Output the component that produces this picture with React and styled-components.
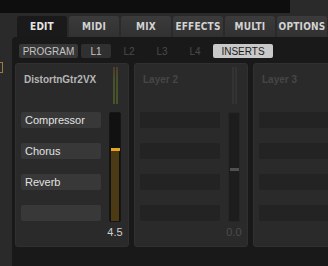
import React from "react";
import styled, { createGlobalStyle } from "styled-components";

const Global = createGlobalStyle`
  html, body {
    margin: 0;
    padding: 0;
    background: #2a2a2a;
    width: 328px;
    height: 266px;
    overflow: hidden;
  }
`;

const Page = styled.div`
  width: 328px;
  height: 266px;
  display: flex;
  flex-direction: column;
  background: #2a2a2a;
  font-family: "Liberation Sans", Arial, sans-serif;
  overflow: hidden;
`;

const TopStrip = styled.div`
  height: 13px;
  width: 290px;
  background: #0e0e0e;
`;

const TabRow = styled.div`
  display: flex;
  gap: 2px;
  margin-top: 3px;
  padding-left: 17px;
  height: 21px;
`;

const Tab = styled.div`
  width: 50px;
  flex: none;
  display: flex;
  align-items: center;
  justify-content: center;
  border-radius: 3px 3px 0 0;
  background: ${(p) =>
    p.$active ? "#1a1a1a" : "linear-gradient(#3b3b3b, #313131)"};
  color: ${(p) => (p.$active ? "#e6e6e6" : "#d2d2d2")};
  font-family: "DejaVu Sans Condensed", "DejaVu Sans", sans-serif;
  font-weight: bold;
  font-size: 10px;
  letter-spacing: 0.2px;
`;

const Body = styled.div`
  flex: 1;
  display: flex;
  min-height: 0;
`;

const Gutter = styled.div`
  width: 12px;
  flex: none;
  padding-top: 25px;
`;

const Marker = styled.div`
  width: 2px;
  height: 9px;
  border: 1px solid #9c7c3c;
  border-left: none;
`;

const MainPanel = styled.div`
  flex: 1;
  background: #191919;
  border-top-left-radius: 4px;
  padding: 7px 0 0 3px;
  display: flex;
  flex-direction: column;
  overflow: hidden;
`;

const SubTabs = styled.div`
  display: flex;
  gap: 3px;
  padding-left: 4px;
  height: 14px;
`;

const SubTab = styled.div`
  width: ${(p) => p.$w || 30}px;
  flex: none;
  display: flex;
  align-items: center;
  justify-content: center;
  border-radius: 2px;
  font-size: 10px;
  background: ${(p) =>
    p.$light ? "#c9c9c9" : p.$dim ? "transparent" : p.$mid ? "#303030" : "#373737"};
  color: ${(p) => (p.$light ? "#1c1c1c" : p.$dim ? "#4a4a4a" : "#c4c4c4")};
`;

const Layers = styled.div`
  display: flex;
  gap: 5px;
  margin-top: 5px;
`;

const Card = styled.div`
  width: 114px;
  height: 184px;
  flex: none;
  box-sizing: border-box;
  background: #2a2a2a;
  border: 1px solid #303030;
  border-radius: 3px;
  display: flex;
  padding: 2px 7px 0 5px;
  gap: 8px;
`;

const LeftCol = styled.div`
  width: 80px;
  display: flex;
  flex-direction: column;
`;

const Title = styled.div`
  margin-top: 8px;
  padding-left: 3px;
  height: 12px;
  line-height: 12px;
  font-size: 10px;
  font-weight: bold;
  color: ${(p) => (p.$dim ? "#464646" : "#b6b6b6")};
  white-space: nowrap;
`;

const Slots = styled.div`
  margin-top: 26px;
  display: flex;
  flex-direction: column;
  gap: 15px;
`;

const Slot = styled.div`
  height: 16px;
  border-radius: 2px;
  background: ${(p) => (p.$dim ? "#232323" : "#383838")};
  color: #e2e2e2;
  font-size: 11px;
  line-height: 16px;
  padding-left: 4px;
  white-space: nowrap;
`;

const RightCol = styled.div`
  width: 12px;
  flex: none;
  display: flex;
  flex-direction: column;
  align-items: center;
`;

const Meter = styled.div`
  margin-top: 1px;
  height: 37px;
  display: flex;
  gap: 1px;
`;

const MeterBar = styled.div`
  width: 2px;
  background: ${(p) =>
    p.$dim ? "#333333" : "linear-gradient(#54392a, #47502a 30%, #4a5429)"};
`;

const Track = styled.div`
  margin-top: 8px;
  width: 12px;
  height: 110px;
  box-sizing: border-box;
  background: ${(p) => (p.$dim ? "#1d1d1d" : "#111111")};
  border: 1px solid ${(p) => (p.$dim ? "#262626" : "#161616")};
  border-radius: 2px;
  display: flex;
  flex-direction: column;
  align-items: center;
`;

const Handle = styled.div`
  width: 9px;
  height: 3px;
  background: ${(p) => (p.$dim ? "#505050" : "#e6a222")};
  flex: none;
`;

const Fill = styled.div`
  flex: 1;
  width: 8px;
  background: ${(p) => (p.$dim ? "transparent" : "#4c3a14")};
`;

const Value = styled.div`
  margin-top: 5px;
  width: 30px;
  text-align: center;
  font-size: 11px;
  line-height: 10px;
  color: ${(p) => (p.$dim ? "#4c4c4c" : "#cfcfcf")};
`;

const tabs = ["EDIT", "MIDI", "MIX", "EFFECTS", "MULTI", "OPTIONS"];

const layers = [
  { title: "DistortnGtr2VX", slots: ["Compressor", "Chorus", "Reverb", ""], handle: 35, value: "4.5" },
  { title: "Layer 2", dim: true, slots: ["", "", "", ""], handle: 55, value: "0.0" },
  { title: "Layer 3", dim: true, slots: ["", "", "", ""], handle: 55, value: null },
];

const LayerCard = ({ title, dim, slots, handle, value }) => (
  <Card>
    <LeftCol>
      <Title $dim={dim}>{title}</Title>
      <Slots>
        {slots.map((s, i) => (
          <Slot key={i} $dim={dim}>{s}</Slot>
        ))}
      </Slots>
    </LeftCol>
    <RightCol>
      <Meter>
        <MeterBar $dim={dim} />
        <MeterBar $dim={dim} />
      </Meter>
      <Track $dim={dim}>
        <div style={{ height: handle, flex: "none" }} />
        <Handle $dim={dim} />
        <Fill $dim={dim} />
      </Track>
      {value && <Value $dim={dim}>{value}</Value>}
    </RightCol>
  </Card>
);

export default function App() {
  return (
    <Page>
      <Global />
      <TopStrip />
      <TabRow>
        {tabs.map((t) => (
          <Tab key={t} $active={t === "EDIT"}>{t}</Tab>
        ))}
      </TabRow>
      <Body>
        <Gutter>
          <Marker />
        </Gutter>
        <MainPanel>
          <SubTabs>
            <SubTab $w={59}>PROGRAM</SubTab>
            <SubTab $mid>L1</SubTab>
            <SubTab $dim>L2</SubTab>
            <SubTab $dim>L3</SubTab>
            <SubTab $dim>L4</SubTab>
            <SubTab $w={60} $light>INSERTS</SubTab>
          </SubTabs>
          <Layers>
            {layers.map((l) => (
              <LayerCard key={l.title} {...l} />
            ))}
          </Layers>
        </MainPanel>
      </Body>
    </Page>
  );
}
